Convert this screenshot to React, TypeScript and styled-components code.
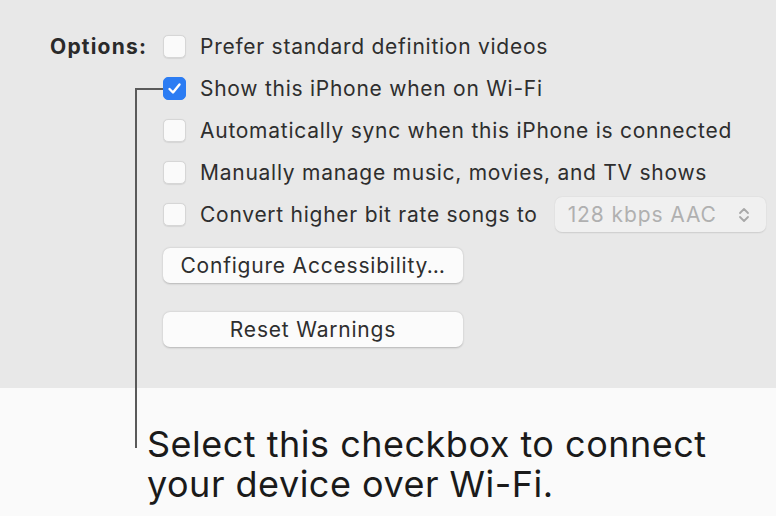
import React from "react";
import styled, { createGlobalStyle } from "styled-components";

const Global = createGlobalStyle`
  html, body { margin: 0; padding: 0; background: #fafafa; }
  body { font-family: Inter, "Liberation Sans", Arial, sans-serif; }
`;

const Page = styled.div`
  position: relative;
  width: 776px;
  height: 516px;
  overflow: hidden;
  background: #fafafa;
`;

const Panel = styled.div`
  height: 388px;
  box-sizing: border-box;
  background: #e8e8e8;
  padding: 34px 0 0 50px;
  display: grid;
  grid-template-columns: 96px auto;
  column-gap: 17px;
  align-content: start;
`;

const Label = styled.div`
  font-size: 21px;
  font-weight: 700;
  color: #2a2a2a;
  height: 25px;
  line-height: 25px;
  letter-spacing: 1.2px;
  white-space: nowrap;
`;

const Column = styled.div`
  display: flex;
  flex-direction: column;
`;

const Row = styled.div`
  display: flex;
  align-items: center;
  height: 25px;
  margin-bottom: 17px;
`;

const Box = styled.span<{ $checked?: boolean }>`
  width: 23px;
  height: 23px;
  box-sizing: border-box;
  border-radius: 5px;
  flex: none;
  display: flex;
  align-items: center;
  justify-content: center;
  background: ${(p) => (p.$checked ? "#2b7cf3" : "#fafafa")};
  border: 1px solid ${(p) => (p.$checked ? "#2b7cf3" : "#d6d6d6")};
  box-shadow: ${(p) => (p.$checked ? "none" : "0 0.5px 1px rgba(0,0,0,0.08)")};
`;

const RowText = styled.span`
  margin-left: 14px;
  font-size: 21px;
  color: #2e2e2e;
  white-space: nowrap;
  letter-spacing: 0.74px;
`;

const Popup = styled.div`
  margin-left: 17px;
  width: 211px;
  height: 35px;
  box-sizing: border-box;
  border-radius: 7px;
  background: #f0f0f0;
  box-shadow: 0 0.5px 1.5px rgba(0,0,0,0.12);
  display: flex;
  align-items: center;
  justify-content: space-between;
  padding: 0 16px 0 13px;
  font-size: 21px;
  letter-spacing: 0.9px;
  color: #b0b0b0;
  white-space: nowrap;
`;

const Button = styled.div<{ $gap?: number }>`
  width: 300px;
  height: 35px;
  box-sizing: border-box;
  border-radius: 7px;
  background: #fbfbfb;
  box-shadow: 0 0.5px 2px rgba(0,0,0,0.22);
  display: flex;
  align-items: center;
  justify-content: center;
  font-size: 21px;
  letter-spacing: 0.8px;
  color: #2e2e2e;
  margin-top: ${(p) => p.$gap ?? 0}px;
`;

const Caption = styled.div`
  padding: 424px 0 0 147px;
  font-size: 36px;
  line-height: 40px;
  color: #1a1a1a;
  letter-spacing: 0.5px;
  white-space: nowrap;
`;

const Callout = styled.div`
  position: absolute;
  left: 135px;
  top: 88px;
  width: 28px;
  height: 360px;
  border-left: 2px solid #5a5a5a;
  border-top: 2px solid #5a5a5a;
  box-sizing: border-box;
`;

const CaptionWrap = styled.div`
  position: absolute;
  left: 0;
  top: 0;
`;

const Check = () => (
  <svg width="15" height="15" viewBox="0 0 15 15">
    <path d="M2.5 8 L6 11.5 L12.5 3.5" fill="none" stroke="#fff" strokeWidth="2.4" strokeLinecap="round" strokeLinejoin="round" />
  </svg>
);

const Chevrons = () => (
  <svg width="12" height="18" viewBox="0 0 12 18">
    <path d="M2 7 L6 3 L10 7 M2 11 L6 15 L10 11" fill="none" stroke="#a8a8a8" strokeWidth="1.8" strokeLinecap="round" strokeLinejoin="round" />
  </svg>
);

const items = [
  { text: "Prefer standard definition videos", checked: false },
  { text: "Show this iPhone when on Wi-Fi", checked: true },
  { text: "Automatically sync when this iPhone is connected", checked: false },
  { text: "Manually manage music, movies, and TV shows", checked: false },
];

export default function App() {
  return (
    <Page>
      <Global />
      <Panel>
        <Label>Options:</Label>
        <Column>
          {items.map((it) => (
            <Row key={it.text}>
              <Box $checked={it.checked}>{it.checked && <Check />}</Box>
              <RowText>{it.text}</RowText>
            </Row>
          ))}
          <Row>
            <Box />
            <RowText>Convert higher bit rate songs to</RowText>
            <Popup>
              <span>128 kbps AAC</span>
              <Chevrons />
            </Popup>
          </Row>
          <Button $gap={4}>Configure Accessibility…</Button>
          <Button $gap={29}>Reset Warnings</Button>
        </Column>
      </Panel>
      <Callout />
      <CaptionWrap>
        <Caption>
          Select this checkbox to connect
          <br />
          your device over Wi-Fi.
        </Caption>
      </CaptionWrap>
    </Page>
  );
}
